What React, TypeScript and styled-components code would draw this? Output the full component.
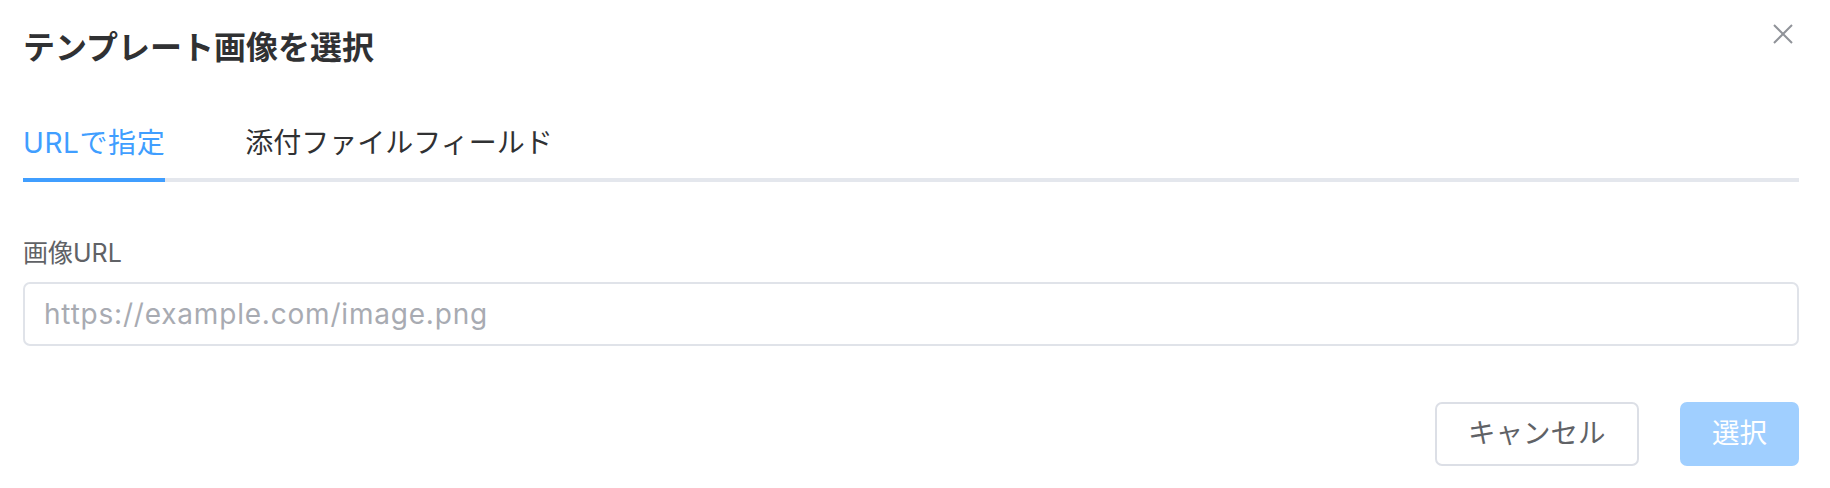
import React from "react";
import styled, { createGlobalStyle } from "styled-components";

const GlobalStyle = createGlobalStyle`
  html, body { margin: 0; padding: 0; background: #ffffff; }
  body {
    font-family: Inter, "Noto Sans CJK JP", "Noto Sans", sans-serif;
    -webkit-font-smoothing: antialiased;
  }
  * { box-sizing: border-box; }
`;

const Dialog = styled.div`
  width: 1830px;
  height: 488px;
  padding: 0 31px 0 23px;
  display: flex;
  flex-direction: column;
  background: #ffffff;
`;

const Header = styled.div`
  display: flex;
  justify-content: space-between;
  align-items: flex-start;
  padding-top: 26px;
`;

const Title = styled.h2`
  margin: 0;
  font-size: 32px;
  line-height: 44px;
  font-weight: 700;
  color: #303133;
`;

const CloseButton = styled.button`
  width: 20px;
  height: 20px;
  margin: -2px 6px 0 0;
  padding: 0;
  border: none;
  background: transparent;
  display: flex;
  align-items: center;
  justify-content: center;
  cursor: pointer;
`;

const TabBar = styled.div`
  margin-top: 39px;
  display: flex;
  border-bottom: 4px solid #e4e7ed;
`;

const Tab = styled.div<{ $active?: boolean; $first?: boolean }>`
  position: relative;
  height: 73px;
  line-height: 69px;
  font-size: 28px;
  letter-spacing: ${(p) => (p.$first ? "0.6px" : "0")};
  color: ${(p) => (p.$active ? "#409eff" : "#303133")};
  padding: ${(p) => (p.$first ? "0 40px 0 0" : "0 40px")};
  margin-bottom: -4px;
  cursor: pointer;
`;

const ActiveBar = styled.span`
  position: absolute;
  left: 0;
  right: 40px;
  bottom: 0;
  height: 4px;
  background: #409eff;
`;

const Field = styled.div`
  margin-top: 54px;
  display: flex;
  flex-direction: column;
`;

const Label = styled.label`
  font-size: 25px;
  line-height: 35px;
  color: #606266;
  margin-bottom: 11px;
`;

const Input = styled.input`
  height: 64px;
  width: 100%;
  border: 2px solid #e0e3e9;
  border-radius: 7px;
  padding: 0 19px;
  font-family: Inter, "Noto Sans CJK JP", sans-serif;
  font-size: 28px;
  letter-spacing: 0.8px;
  color: #606266;
  outline: none;
  &::placeholder {
    color: #a8abb2;
  }
`;

const Footer = styled.div`
  margin-top: 56px;
  display: flex;
  justify-content: flex-end;
  gap: 41px;
`;

const Button = styled.button<{ $primary?: boolean }>`
  height: 64px;
  padding: 0 ${(p) => (p.$primary ? "30px" : "31.5px")};
  border-radius: 7px;
  border: 2px solid ${(p) => (p.$primary ? "#a0cfff" : "#dcdfe6")};
  background: ${(p) => (p.$primary ? "#a0cfff" : "#ffffff")};
  color: ${(p) => (p.$primary ? "#ffffff" : "#606266")};
  font-family: Inter, "Noto Sans CJK JP", sans-serif;
  font-size: 27.5px;
  line-height: 1;
  cursor: ${(p) => (p.$primary ? "not-allowed" : "pointer")};
`;

export default function App() {
  return (
    <>
      <GlobalStyle />
      <Dialog>
        <Header>
          <Title>テンプレート画像を選択</Title>
          <CloseButton aria-label="close">
            <svg width="20" height="20" viewBox="0 0 20 20">
              <path d="M1 1 L19 19 M19 1 L1 19" stroke="#909399" strokeWidth="2" fill="none" />
            </svg>
          </CloseButton>
        </Header>
        <TabBar>
          <Tab $active $first>
            URLで指定
            <ActiveBar />
          </Tab>
          <Tab>添付ファイルフィールド</Tab>
        </TabBar>
        <Field>
          <Label>画像URL</Label>
          <Input placeholder="https://example.com/image.png" />
        </Field>
        <Footer>
          <Button>キャンセル</Button>
          <Button $primary disabled>
            選択
          </Button>
        </Footer>
      </Dialog>
    </>
  );
}
